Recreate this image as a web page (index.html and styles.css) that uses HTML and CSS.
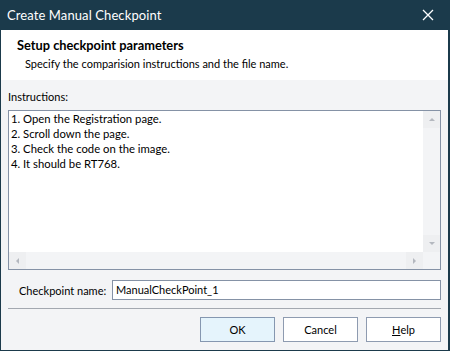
FILE: index.html
```html
<!DOCTYPE html>
<html>
<head>
<meta charset="utf-8">
<link rel="stylesheet" href="styles.css">
</head>
<body>
<div class="window">
  <div class="titlebar">
    <span class="title">Create Manual Checkpoint</span>
    <svg class="close" width="12" height="12" viewBox="0 0 12 12"><path d="M1 1 L11 11 M11 1 L1 11" stroke="#fff" stroke-width="1.3" fill="none"/></svg>
  </div>
  <div class="header">
    <div class="h-title">Setup checkpoint parameters</div>
    <div class="h-sub">Specify the comparision instructions and the file name.</div>
  </div>
  <div class="body">
    <div class="label">Instructions:</div>
    <div class="memo">
      <div class="memo-text">
        <div class="line">1. Open the Registration page.</div>
        <div class="line">2. Scroll down the page.</div>
        <div class="line">3. Check the code on the image.</div>
        <div class="line">4. It should be RT768.</div>
      </div>
      <div class="vscroll">
        <div class="sbtn"><span class="tri up"></span></div>
        <div class="sbtn"><span class="tri down"></span></div>
      </div>
      <div class="hscroll">
        <div class="sbtn h"><span class="tri left"></span></div>
        <div class="sbtn h"><span class="tri right"></span></div>
      </div>
      <div class="corner"></div>
    </div>
    <div class="name-row">
      <span class="name-label">Checkpoint name:</span>
      <div class="input">ManualCheckPoint_1</div>
    </div>
    <div class="sep"></div>
    <div class="buttons">
      <div class="btn default">OK</div>
      <div class="btn">Cancel</div>
      <div class="btn"><u>H</u>elp</div>
    </div>
  </div>
</div>
</body>
</html>
```
FILE: styles.css
```css
* { box-sizing: border-box; }
html, body { margin: 0; padding: 0; }
body {
  font-family: Lato, "Noto Sans", "DejaVu Sans", sans-serif;
  font-size: 11px;
  color: #000;
}
.window {
  width: 450px;
  height: 351px;
  overflow: hidden;
  background: #f3f4f6;
  border-left: 1px solid #1b3a4b;
  border-right: 2px solid #1b3a4b;
  border-bottom: 1px solid #1b3a4b;
  display: flex;
  flex-direction: column;
}
.titlebar {
  flex-shrink: 0;
  height: 30px;
  background: #1b3a4b;
  color: #fff;
  display: flex;
  align-items: center;
  justify-content: space-between;
  padding: 0 16px 0 7px;
  margin: 0 -2px 0 -1px;
}
.title { font-size: 13px; letter-spacing: 0.1px; }
.close { display: block; }
.header {
  flex-shrink: 0;
  height: 50px;
  background: #fff;
  padding: 7px 0 0 16px;
}
.h-title { font-weight: bold; font-size: 12.8px; line-height: 17px; }
.h-sub { padding-left: 8px; line-height: 17px; margin-top: 1px; }
.body {
  flex: 1;
  padding: 9px 7px 0 7px;
  display: flex;
  flex-direction: column;
}
.label { line-height: 16px; margin-bottom: 5px; }
.memo {
  flex-shrink: 0;
  height: 160px;
  border: 1px solid #8592a6;
  background: #fff;
  display: grid;
  grid-template-columns: 1fr 17px;
  grid-template-rows: 1fr 17px;
}
.memo-text {
  padding: 0 0 0 2px;
  white-space: nowrap;
  font-size: 11.3px;
}
.line { height: 15px; line-height: 15px; }
.vscroll {
  background: #f3f4f6;
  display: flex;
  flex-direction: column;
  justify-content: space-between;
}
.hscroll {
  background: #f3f4f6;
  display: flex;
  justify-content: space-between;
}
.corner { background: #f3f4f6; }
.sbtn {
  width: 17px;
  height: 17px;
  background: #eeeff1;
  display: flex;
  align-items: center;
  justify-content: center;
}
.tri { width: 0; height: 0; display: block; }
.tri.up { border-left: 3px solid transparent; border-right: 3px solid transparent; border-bottom: 3px solid #b4b8bf; }
.tri.down { border-left: 3px solid transparent; border-right: 3px solid transparent; border-top: 3px solid #b4b8bf; }
.tri.left { border-top: 3px solid transparent; border-bottom: 3px solid transparent; border-right: 3px solid #b4b8bf; }
.tri.right { border-top: 3px solid transparent; border-bottom: 3px solid transparent; border-left: 3px solid #b4b8bf; }
.name-row {
  flex-shrink: 0;
  display: flex;
  align-items: center;
  margin-top: 10px;
  padding-left: 11px;
}
.name-label { width: 93px; white-space: nowrap; }
.input {
  flex: 1;
  height: 20px;
  border: 1px solid #8592a6;
  background: #fff;
  padding-left: 3px;
  line-height: 18px;
}
.sep {
  flex-shrink: 0;
  height: 1px;
  background: #a3a8b0;
  margin-top: 8px;
}
.buttons {
  flex-shrink: 0;
  display: flex;
  justify-content: flex-end;
  gap: 8px;
  margin-top: 8px;
}
.btn {
  width: 75px;
  height: 25px;
  border: 1px solid #8e9bb0;
  background: #fff;
  display: flex;
  align-items: center;
  justify-content: center;
}
.btn.default { background: #e5f4fc; border-color: #8597b0; }
```
